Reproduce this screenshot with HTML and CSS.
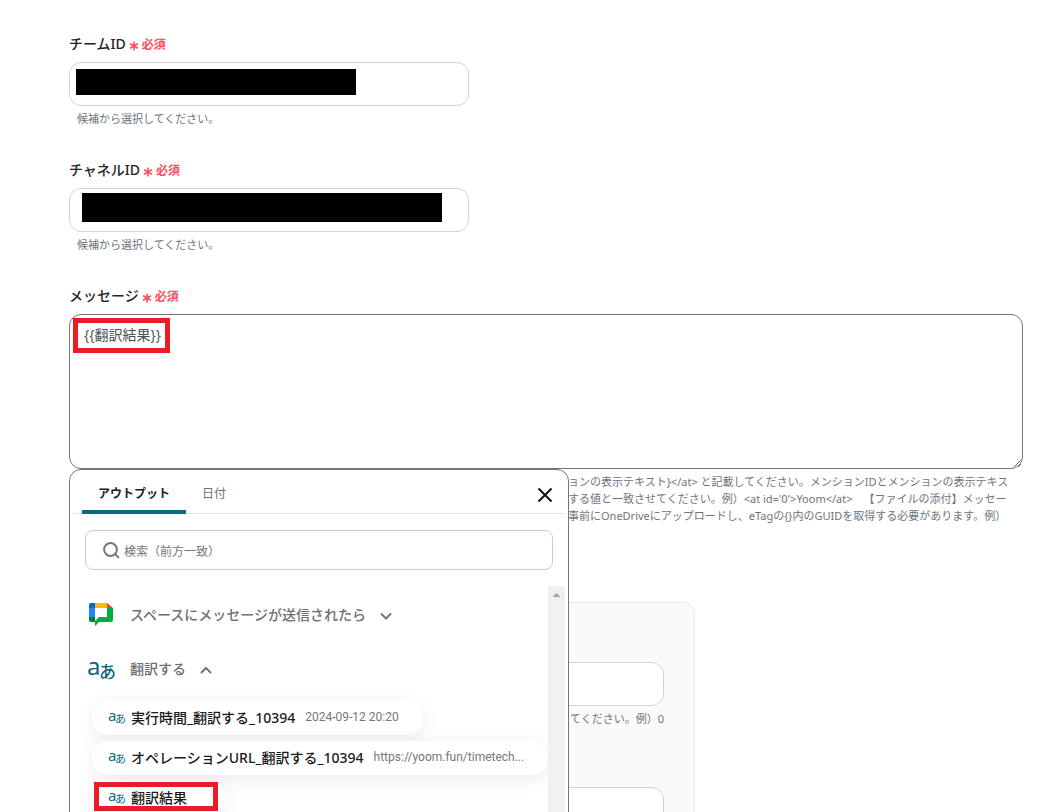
FILE: index.html
```html
<!DOCTYPE html>
<html lang="ja">
<head>
<meta charset="utf-8">
<meta name="viewport" content="width=device-width, initial-scale=1">
<title>メッセージ</title>
<link rel="stylesheet" href="styles.css">
</head>
<body>
<form class="page">
  <div class="field">
    <label class="label" for="team">チームID <span class="required"><svg class="star" viewBox="0 0 10 10"><path d="M5 0.4v9.2M1 2.7l8 4.6M9 2.7L1 7.3"/></svg>必須</span></label>
    <div class="control control-narrow">
      <input class="input" id="team" type="text">
      <span class="mask mask-team"></span>
    </div>
    <p class="hint">候補から選択してください。</p>
  </div>
  <div class="field">
    <label class="label" for="channel">チャネルID <span class="required"><svg class="star" viewBox="0 0 10 10"><path d="M5 0.4v9.2M1 2.7l8 4.6M9 2.7L1 7.3"/></svg>必須</span></label>
    <div class="control control-narrow">
      <input class="input" id="channel" type="text">
      <span class="mask mask-channel"></span>
    </div>
    <p class="hint">候補から選択してください。</p>
  </div>
  <div class="field field-message">
    <label class="label" for="message">メッセージ <span class="required"><svg class="star" viewBox="0 0 10 10"><path d="M5 0.4v9.2M1 2.7l8 4.6M9 2.7L1 7.3"/></svg>必須</span></label>
    <div class="control">
      <textarea class="textarea" id="message">{{翻訳結果}}</textarea>
      <span class="mark mark-message"></span>

      <section class="popup">
        <header class="popup-head">
          <div class="tabs">
            <button class="tab tab-active" type="button">アウトプット</button>
            <button class="tab" type="button">日付</button>
          </div>
          <button class="close" type="button" aria-label="閉じる"><svg width="16" height="16" viewBox="0 0 16 16"><path d="M1.5 1.5l13 13M14.5 1.5l-13 13"/></svg></button>
        </header>
        <div class="search">
          <svg class="search-icon" width="18" height="18" viewBox="0 0 18 18"><circle cx="7.5" cy="7.5" r="6.4"/><path d="M12.1 12.1L15.9 15.9"/></svg>
          <input class="search-input" type="text" placeholder="検索（前方一致）" aria-label="検索（前方一致）">
        </div>
        <div class="results">
          <div class="list">
            <button class="group" type="button">
              <svg class="group-icon" width="28" height="28" viewBox="0 0 28 28">
                <path fill="#0066da" d="M4 3h4v5H2V5a2 2 0 0 1 2-2z"/>
                <path fill="#fbbc04" d="M8 3h12v5H8z"/>
                <path fill="#ea4335" d="M20 3l6 5h-6z"/>
                <path fill="#2684fc" d="M2 8h6v9H2z"/>
                <path fill="#00832d" d="M2 17h6v5H4a2 2 0 0 1-2-2z"/>
                <path fill="#00ac47" d="M20 8h6v12a2 2 0 0 1-2 2H12l-3 3.3c-.6.6-1 .4-1-.4V21l4-4h8z"/>
              </svg>
              <span class="group-name">スペースにメッセージが送信されたら</span>
              <svg class="chevron" width="14" height="14" viewBox="0 0 14 14"><path d="M2 4.5l5 5 5-5"/></svg>
            </button>
            <button class="group" type="button">
              <span class="translate translate-large"><span class="latin">a</span><span class="kana">あ</span></span>
              <span class="group-name">翻訳する</span>
              <svg class="chevron" width="14" height="14" viewBox="0 0 14 14"><path d="M2 10l5-5 5 5"/></svg>
            </button>
            <div class="pills">
              <button class="pill" type="button"><span class="translate"><span class="latin">a</span><span class="kana">あ</span></span><span>実行時間_翻訳する_10394</span><span class="value">2024-09-12 20:20</span></button>
              <button class="pill" type="button"><span class="translate"><span class="latin">a</span><span class="kana">あ</span></span><span>オペレーションURL_翻訳する_10394</span><span class="value">https://yoom.fun/timetech...</span></button>
              <button class="pill pill-marked" type="button"><span class="translate"><span class="latin">a</span><span class="kana">あ</span></span><span>翻訳結果</span><span class="mark mark-pill"></span></button>
            </div>
          </div>
          <div class="scrollbar"><span class="arrow"></span></div>
        </div>
      </section>
    </div>
    <p class="hint hint-long">
      <span>ョンの表示テキスト}&lt;/at&gt; と記載してください。メンションIDとメンションの表示テキス</span>
      <span>する値と一致させてください。例）&lt;at id='0'&gt;Yoom&lt;/at&gt;　【ファイルの添付】メッセー</span>
      <span>事前にOneDriveにアップロードし、eTagの{}内のGUIDを取得する必要があります。例）</span>
    </p>
  </div>
  <div class="card">
    <div>
      <input class="input" type="text" aria-label="メンションID">
      <p class="hint hint-end">てください。例）0</p>
    </div>
    <input class="input" type="text" aria-label="表示テキスト">
  </div>
</form>
</body>
</html>
```
FILE: styles.css
```css
* { box-sizing: border-box; }

body {
  margin: 0;
  background: #fff;
  color: #212529;
  font-family: "Noto Sans", "Noto Sans CJK JP", sans-serif;
  font-size: 14px;
  text-spacing-trim: space-all;
}

button, input, textarea { font: inherit; color: inherit; }
button { border: 0; background: none; padding: 0; }

.page {
  height: 100vh;
  overflow: hidden;
  padding: 34px 41px 0 69px;
}

.field { margin-bottom: 33px; }
.field-message { margin-bottom: 78px; }

.label {
  display: flex;
  align-items: center;
  gap: 3px;
  height: 20px;
  margin-bottom: 8px;
  font-weight: 500;
  line-height: 20px;
}

.required {
  display: flex;
  align-items: center;
  gap: 3px;
  padding-top: 2px;
  color: #ff4a60;
  font-size: 12px;
  font-weight: 700;
}

.star {
  width: 10px;
  height: 10px;
  margin-top: 2px;
  fill: none;
  stroke: currentColor;
  stroke-width: 1.6;
}

.control { position: relative; }
.control-narrow { max-width: 400px; }

.input {
  display: block;
  width: 100%;
  height: 44px;
  padding: 0 14px;
  border: 1px solid #ced4da;
  border-radius: 12px;
  background: #fff;
}

.textarea {
  display: block;
  width: 100%;
  height: 155px;
  padding: 10px 14px;
  border: 1px solid #757575;
  border-radius: 12px;
  background: #fff;
  color: #495057;
  font-family: "Open Sans", "Noto Sans CJK JP", sans-serif;
  line-height: 20px;
  resize: vertical;
}

.hint {
  margin: 4px 0 0;
  padding-left: 8px;
  color: #6c757d;
  font-size: 11px;
  line-height: 17px;
}

.hint-long { padding-left: 499px; white-space: nowrap; }
.hint-long span { display: block; }
.hint-end { text-align: right; }

.mask { position: absolute; background: #000; }
.mask-team { left: 7px; top: 7px; width: 280px; height: 26px; }
.mask-channel { left: 13px; top: 5px; width: 360px; height: 29px; }

.mark { position: absolute; border: 5px solid #ed1c24; }
.mark-message { left: 4px; top: 4px; width: 97px; height: 35px; }
.mark-pill { left: 2px; top: 1px; width: 124px; height: 29px; }

.popup {
  position: absolute;
  left: 0;
  top: 100%;
  width: 500px;
  height: 480px;
  padding: 0 3px;
  border: 1px solid #757575;
  border-radius: 12px;
  background: #fff;
}

.popup-head {
  display: flex;
  justify-content: space-between;
  height: 44px;
  padding: 0 12px 0 9px;
  border-bottom: 1px solid #e3e5e7;
}

.tabs { display: flex; }

.tab {
  height: 44px;
  padding: 6px 16px 0;
  border-bottom: 4px solid transparent;
  color: #6f6f6f;
  font-size: 12px;
}

.tab-active {
  border-radius: 3px 3px 0 0;
  color: #222;
  font-weight: 700;
  background: linear-gradient(#0b6a82, #0b6a82) bottom / 100% 4px no-repeat border-box;
}

.close { display: flex; align-items: center; padding-top: 7px; }
.close svg { fill: none; stroke: #111; stroke-width: 2; }

.search {
  display: flex;
  align-items: center;
  gap: 3px;
  height: 40px;
  margin: 16px 12px;
  padding: 2px 16px 0 17px;
  border: 1px solid #ccc;
  border-radius: 8px;
}

.search-icon { flex: none; fill: none; stroke: #777; stroke-width: 2; }

.search-input {
  flex: 1;
  padding: 0;
  border: 0;
  outline: 0;
  font-size: 12px;
}
.search-input::placeholder { color: #757575; opacity: 1; }

.results { display: flex; height: 360px; }

.list {
  flex: 1;
  min-width: 0;
  overflow: hidden;
  padding: 1px 0 0 14px;
}

.scrollbar {
  flex: none;
  display: flex;
  justify-content: center;
  width: 17px;
  padding-top: 7px;
  background: #f0f0f0;
}

.arrow {
  width: 8px;
  height: 4px;
  background: #a3a3a3;
  clip-path: polygon(50% 0, 100% 100%, 0 100%);
}

.group {
  display: flex;
  align-items: center;
  height: 54px;
  color: #6f6f6f;
  font-weight: 500;
}
.group-icon { flex: none; margin-right: 15px; }

.chevron {
  margin: 4px 0 0 13px;
  fill: none;
  stroke: #757575;
  stroke-width: 2;
}

/* Latin and kana letters side by side, the kana set lower */
.translate {
  flex: none;
  display: flex;
  align-items: flex-end;
  width: 17px;
  height: 14px;
  margin-right: 6px;
  color: #0b6a82;
  font-size: 15px;
  font-weight: 400;
  line-height: 14px;
}
.translate .latin { width: 7px; padding-bottom: 2px; }
.translate .kana { font-size: 11px; line-height: 11px; }

.translate-large {
  width: 28px;
  height: 24px;
  margin-right: 15px;
  font-size: 24px;
  line-height: 24px;
}
.translate-large .latin { width: 12px; padding-bottom: 2px; }
.translate-large .kana { font-size: 17px; line-height: 17px; font-weight: 500; }

.pills {
  display: flex;
  flex-direction: column;
  align-items: flex-start;
  gap: 6px;
  padding: 6px 0 0 5px;
}

.pill {
  position: relative;
  display: flex;
  align-items: center;
  height: 34px;
  padding: 0 24px 2px 16px;
  border-radius: 17px;
  background: #fff;
  box-shadow: 0 4px 20px rgba(0, 0, 0, 0.08);
  color: #1a1a1a;
  font-weight: 500;
  white-space: nowrap;
}
.pill-marked { padding-right: 38px; }

.value {
  margin-left: 10px;
  color: #777;
  font-family: Roboto, "Noto Sans CJK JP", sans-serif;
  font-size: 12px;
  font-weight: 400;
}

.card {
  display: flex;
  flex-direction: column;
  gap: 60px;
  width: 626px;
  max-width: 100%;
  height: 320px;
  padding: 59px 30px 30px;
  border: 1px solid #e5e7e9;
  border-radius: 12px;
  background: #fafafa;
}
```
